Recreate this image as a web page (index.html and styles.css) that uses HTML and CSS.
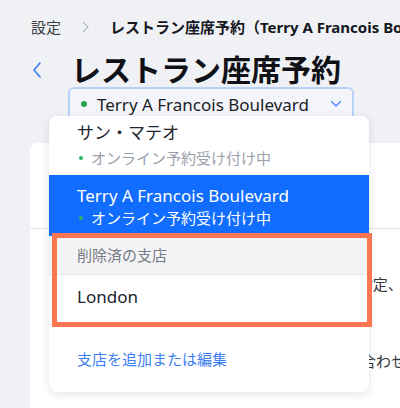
FILE: index.html
```html
<!DOCTYPE html>
<html lang="ja">
<head>
    <meta charset="UTF-8">
    <meta name="viewport" content="width=device-width, initial-scale=1.0">
    <title>レストラン座席予約</title>
    <link rel="stylesheet" href="styles.css">
</head>
<body>
    <div class="page">
        <nav class="breadcrumb">
            <span class="crumb">設定</span>
            <svg class="crumb-sep" width="7" height="12" viewBox="0 0 7 12"><path d="M1 1l5 5-5 5" fill="none" stroke="#b5b9c2" stroke-width="1.2"/></svg>
            <span class="crumb current">レストラン座席予約（Terry A Francois Boulevard）</span>
        </nav>

        <div class="title-row">
            <svg class="back" width="12" height="18" viewBox="0 0 12 18"><path d="M9 2L3 9l6 7" fill="none" stroke="#3b7cf2" stroke-width="1.6" stroke-linecap="round" stroke-linejoin="round"/></svg>
            <h1>レストラン座席予約</h1>
        </div>

        <div class="select-wrap">
            <div class="select">
                <span class="dot"></span>
                <span class="select-label">Terry A Francois Boulevard</span>
                <svg class="caret" width="12" height="8" viewBox="0 0 12 8"><path d="M1.5 1.5l4.5 4.5 4.5-4.5" fill="none" stroke="#4a86f0" stroke-width="1.4" stroke-linecap="round" stroke-linejoin="round"/></svg>
            </div>

            <!-- Dropdown menu -->
            <div class="menu">
                <div class="option">
                    <div class="option-title">サン・マテオ</div>
                    <div class="option-sub"><span class="mini-dot"></span>オンライン予約受け付け中</div>
                </div>
                <div class="option selected">
                    <div class="option-title">Terry A Francois Boulevard</div>
                    <div class="option-sub"><span class="mini-dot"></span>オンライン予約受け付け中</div>
                </div>
                <div class="section-head">削除済の支店</div>
                <div class="option single">London</div>
                <div class="menu-footer">
                    <a class="menu-link" href="#">支店を追加または編集</a>
                </div>
                <div class="highlight"></div>
            </div>
        </div>

        <div class="card">
            <div class="card-head">オンライン予約</div>
            <div class="card-body">
                <p class="line line-a">お客様がオンラインで席を予約できるよう設定、</p>
                <p class="line line-b">予約に関するご質問は店舗までお問い合わせください</p>
            </div>
        </div>
    </div>
</body>
</html>
```

FILE: styles.css
```css
/* General styles */
html, body {
    margin: 0;
    padding: 0;
    overflow: hidden;
}

body {
    font-family: "Noto Sans", "Noto Sans CJK JP", sans-serif;
    background: #eff1f5;
    color: #20242c;
    width: 400px;
    height: 408px;
}

.page {
    padding-top: 18px;
}

/* Breadcrumb */
.breadcrumb {
    display: flex;
    align-items: center;
    white-space: nowrap;
    overflow: hidden;
    height: 18px;
    padding-left: 31px;
    font-size: 15px;
    line-height: 18px;
}

.breadcrumb > * {
    flex-shrink: 0;
}

.crumb {
    color: #3a3e47;
}

.crumb-sep {
    margin: 0 21px;
}

.crumb.current {
    font-weight: bold;
    color: #14171d;
}

/* Title */
.title-row {
    display: flex;
    align-items: center;
    height: 34px;
    margin-top: 17px;
    padding-left: 31px;
}

.back {
    margin-right: 28px;
}

h1 {
    margin: 0;
    font-size: 30px;
    line-height: 34px;
    font-weight: bold;
    color: #0f1117;
}

/* Location select */
.select-wrap {
    position: relative;
    margin-left: 68px;
    width: 286px;
}

.select {
    display: flex;
    align-items: center;
    box-sizing: border-box;
    height: 34px;
    padding: 0 10px 0 11px;
    border: 2px solid #b8d1f8;
    border-radius: 6px;
    background: #f3f5fa;
}

.dot {
    width: 6px;
    height: 6px;
    border-radius: 50%;
    background: #25a55a;
    margin-right: 10px;
}

.select-label {
    flex: 1;
    font-size: 17px;
    color: #1b1e25;
}

/* Dropdown */
.menu {
    position: absolute;
    top: 29px;
    left: -19px;
    width: 320px;
    background: #fff;
    border-radius: 8px;
    box-shadow: 0 2px 8px rgba(20, 30, 60, 0.12);
    z-index: 2;
}

.option {
    padding: 7px 28px 7px;
}

.option.selected {
    padding: 11px 28px 8px;
    background: #116dff;
}

.option-title {
    font-size: 17px;
    line-height: 20px;
    margin-bottom: 5px;
}

.selected .option-title {
    margin-bottom: 2px;
}

.option-sub {
    display: flex;
    align-items: center;
    font-size: 15px;
    line-height: 20px;
    color: #9aa0aa;
}

.selected .option-title,
.selected .option-sub {
    color: #fff;
}

.mini-dot {
    width: 4px;
    height: 4px;
    border-radius: 50%;
    background: #2bb35f;
    margin: 0 8px 0 2px;
}

.section-head {
    height: 38px;
    line-height: 38px;
    padding: 0 28px;
    font-size: 15px;
    color: #767b85;
    background: #f4f4f6;
    border-bottom: 1px solid #e4e6eb;
}

.option.single {
    font-size: 17px;
    line-height: 20px;
    padding: 12px 28px 17px;
    border-bottom: 1px solid #eceef2;
}

.menu-footer {
    padding: 23px 28px 22px;
}

.menu-link {
    font-size: 15px;
    line-height: 20px;
    color: #3d7ef3;
    text-decoration: none;
}

/* Annotation frame */
.highlight {
    position: absolute;
    left: 3px;
    top: 117px;
    width: 310px;
    height: 84px;
    border: 5px solid #fd7551;
}

/* Card behind the menu */
.card {
    margin: 22px -40px 0 30px;
    height: 300px;
    background: #fff;
    border-radius: 8px 0 0 0;
}

.card-head {
    height: 85px;
    border-bottom: 1px solid #e2e4e9;
    font-size: 16px;
    line-height: 85px;
    padding-left: 24px;
    color: #20242c;
}

.card-body {
    padding-top: 44px;
}

.line {
    margin: 0;
    white-space: nowrap;
    font-size: 15px;
    line-height: 22px;
    color: #32363e;
}

.line-a {
    padding-left: 43px;
}

.line-b {
    margin-top: 55px;
    padding-left: 76px;
}
```
